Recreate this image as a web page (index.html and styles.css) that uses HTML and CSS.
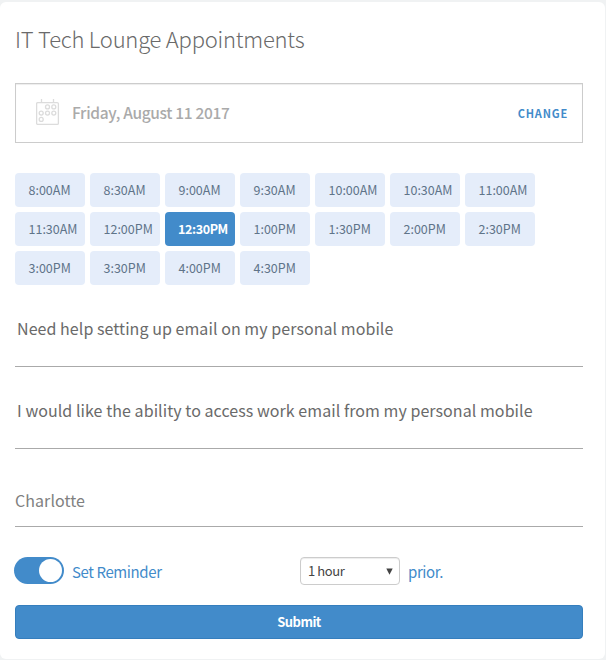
FILE: index.html
```html
<!DOCTYPE html>
<html lang="en">
<head>
<meta charset="utf-8">
<title>IT Tech Lounge Appointments</title>
<link rel="stylesheet" href="styles.css">
</head>
<body>
<main class="card">
  <h1 class="title">IT Tech Lounge Appointments</h1>
  <section class="date-box">
    <svg class="calendar" width="24" height="27" viewBox="0 0 24 27" fill="none" stroke="#dcdcdc" stroke-width="1.3">
      <rect x="0.6" y="3.6" width="21.8" height="21.8" rx="1.2"/>
      <path d="M5.5 0v4M17.5 0v4"/>
      <circle cx="11.5" cy="7.9" r="2"/><circle cx="17.8" cy="7.9" r="2"/>
      <circle cx="5.2" cy="14.1" r="2"/><circle cx="11.5" cy="14.1" r="2"/><circle cx="17.8" cy="14.1" r="2"/>
      <circle cx="5.2" cy="20.4" r="2"/>
    </svg>
    <span class="date">Friday, August 11 2017</span>
    <a class="change">CHANGE</a>
  </section>
  <section class="slots">
    <span class="slot">8:00AM</span><span class="slot">8:30AM</span><span class="slot">9:00AM</span><span class="slot">9:30AM</span><span class="slot">10:00AM</span><span class="slot">10:30AM</span><span class="slot">11:00AM</span>
    <span class="slot">11:30AM</span><span class="slot">12:00PM</span><span class="slot selected">12:30PM</span><span class="slot">1:00PM</span><span class="slot">1:30PM</span><span class="slot">2:00PM</span><span class="slot">2:30PM</span>
    <span class="slot">3:00PM</span><span class="slot">3:30PM</span><span class="slot">4:00PM</span><span class="slot">4:30PM</span>
  </section>
  <div class="field subject">Need help setting up email on my personal mobile</div>
  <div class="field details">I would like the ability to access work email from my personal mobile</div>
  <div class="field person">Charlotte</div>
  <div class="reminder">
    <span class="toggle"><span class="knob"></span></span>
    <span class="label">Set Reminder</span>
    <div class="select"><span>1 hour</span>
      <svg width="7" height="7" viewBox="0 0 7 7"><path d="M0.3 0.5h6.4L3.5 6.8z" fill="#444"/></svg>
    </div>
    <span class="prior">prior.</span>
  </div>
  <button class="submit">Submit</button>
</main>
</body>
</html>
```
FILE: styles.css
```css
* { box-sizing: border-box; }
body {
  margin: 0;
  padding: 2px 1px 2px 0;
  background: #f0f2f3;
  font-family: "Noto Sans CJK SC", "Open Sans", sans-serif;
  font-size: 15px;
  color: #6a6a6a;
  white-space: nowrap;
}
.card {
  height: 657px;
  padding: 20px 22px 0 15px;
  border-radius: 6px;
  background: #fff;
}
.title {
  margin: 0;
  font-size: 22px;
  line-height: 32px;
  font-weight: 300;
  letter-spacing: -0.23px;
}
.date-box {
  display: flex;
  align-items: center;
  height: 60px;
  margin-top: 29px;
  padding: 0 15px 0 20px;
  border: 1px solid #ccc;
  box-shadow: inset 0 1px 1px rgba(0, 0, 0, 0.075);
}
.calendar { margin-right: 12px; margin-top: -2px; }
.date {
  margin-top: -3px;
  color: #aaa;
  font-size: 15.5px;
  font-weight: 500;
  letter-spacing: -0.32px;
}
.change {
  margin-left: auto;
  margin-right: -1px;
  color: #428bca;
  font-size: 11px;
  font-weight: 700;
  letter-spacing: 0.8px;
}
.slots {
  display: grid;
  grid-template-columns: repeat(7, 70px);
  grid-auto-rows: 34px;
  gap: 5px;
  margin-top: 30px;
}
.slot {
  padding-left: 13.5px;
  border-radius: 4px;
  background: #e5edfa;
  color: #5f7489;
  font-size: 12.5px;
  line-height: 34px;
}
.selected {
  padding-left: 13px;
  background: #428bca;
  color: #fff;
  font-weight: 700;
  letter-spacing: -0.38px;
}
.field {
  border-bottom: 1px solid #aaa;
  font-size: 16px;
  line-height: 24px;
  letter-spacing: 0.06px;
}
.subject { height: 51px; margin-top: 31px; padding-left: 2px; }
.details { height: 51px; margin-top: 31px; padding-left: 2px; }
.person { height: 39px; margin-top: 39px; color: #808080; }
.reminder {
  display: flex;
  height: 28px;
  margin-top: 30px;
  color: #428bca;
  letter-spacing: -0.4px;
}
.toggle {
  display: flex;
  justify-content: flex-end;
  width: 50px;
  height: 27px;
  margin-left: -1px;
  padding: 2px;
  border-radius: 14px;
  background: #428bca;
}
.knob { width: 23px; height: 23px; border-radius: 50%; background: #fff; }
.label { width: 228px; margin-left: 8px; line-height: 30px; }
.select {
  display: flex;
  align-items: center;
  justify-content: space-between;
  width: 100px;
  padding: 0 6px 0 7px;
  border: 1px solid #ccc;
  border-radius: 4px;
  box-shadow: inset 0 1px 1px rgba(0, 0, 0, 0.075);
  color: #444;
  font-size: 13px;
  line-height: 26px;
}
.prior { margin-left: 8px; line-height: 30px; }
.submit {
  display: block;
  width: 568px;
  height: 34px;
  margin-top: 20px;
  padding: 0;
  border: 1px solid #357ebd;
  border-radius: 4px;
  background: #428bca;
  color: #fff;
  font: 700 13px/32px "Noto Sans CJK SC", sans-serif;
  letter-spacing: -0.5px;
}
```
